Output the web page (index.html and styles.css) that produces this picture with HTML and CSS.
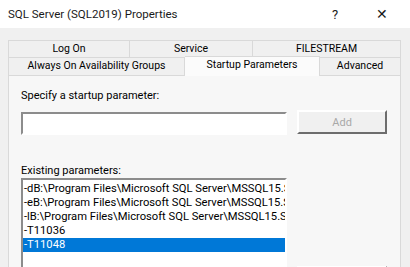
FILE: index.html
```html
<!DOCTYPE html>
<html lang="en">
<head>
    <meta charset="UTF-8">
    <title>SQL Server (SQL2019) Properties</title>
    <link rel="stylesheet" href="styles.css">
</head>
<body>
    <div class="window">
        <div class="titlebar">
            <span class="title">SQL Server (SQL2019) Properties</span>
            <span class="help">?</span>
            <span class="close">&#x2715;</span>
        </div>
        <div class="dialog">
            <div class="tabs">
                <div class="tab-row">
                    <div class="tab w-logon">Log On</div>
                    <div class="tab w-service">Service</div>
                    <div class="tab w-filestream">FILESTREAM</div>
                </div>
                <div class="tab-row">
                    <div class="tab w-always">Always On Availability Groups</div>
                    <div class="tab w-startup active">Startup Parameters</div>
                    <div class="tab w-advanced">Advanced</div>
                </div>
            </div>
            <div class="panel">
                <div class="label">Specify a startup parameter:</div>
                <div class="field-row">
                    <input type="text" class="param-input">
                    <button class="btn" disabled>Add</button>
                </div>
                <div class="label existing">Existing parameters:</div>
                <div class="field-row">
                    <ul class="listbox">
                        <li>-dB:\Program Files\Microsoft SQL Server\MSSQL15.SQL2019\MSSQL\DATA\master.mdf</li>
                        <li>-eB:\Program Files\Microsoft SQL Server\MSSQL15.SQL2019\MSSQL\Log\ERRORLOG</li>
                        <li>-lB:\Program Files\Microsoft SQL Server\MSSQL15.SQL2019\MSSQL\DATA\mastlog.ldf</li>
                        <li>-T11036</li>
                        <li class="selected">-T11048</li>
                    </ul>
                    <button class="btn remove">Remove</button>
                </div>
            </div>
        </div>
    </div>
</body>
</html>
```

FILE: styles.css
```css
body {
    margin: 0;
    font-family: Roboto, sans-serif;
    background: #f0f0f0;
}
.window {
    width: 410px;
    height: 267px;
    overflow: hidden;
}
.titlebar {
    height: 28px;
    background: #ffffff;
    display: flex;
    align-items: center;
    padding-left: 8px;
    font-size: 11.5px;
    color: #1a1a1a;
}
.title {
    flex: 1;
}
.help {
    width: 44px;
    font-size: 13px;
}
.close {
    width: 34px;
    font-size: 14px;
}
.dialog {
    padding: 12px 9px 0 8px;
}
.tab-row {
    display: flex;
    height: 17px;
}
.tab-row + .tab-row {
    height: 18px;
}
.tab {
    box-sizing: border-box;
    border: 1px solid #d9d9d9;
    border-bottom: none;
    background: #f0f0f0;
    font-size: 10.5px;
    line-height: 16px;
    text-align: center;
    color: #000;
    white-space: nowrap;
}
.tab + .tab {
    border-left: none;
}
.w-logon { width: 122px; }
.w-service { width: 123px; }
.w-filestream { width: 148px; }
.w-always { width: 177px; }
.w-startup { width: 135px; }
.w-advanced { width: 81px; }
.tab.active {
    background: #fbfbfb;
    margin-top: -1px;
    height: 20px;
    position: relative;
    z-index: 1;
}
.panel {
    height: 200px;
    box-sizing: border-box;
    border: 1px solid #d9d9d9;
    background: #f7f7f7;
    padding: 12px 13px 0 12px;
}
.label {
    font-size: 11px;
    line-height: 16px;
    color: #000;
}
.field-row {
    display: flex;
    gap: 10px;
    margin-top: 6px;
    align-items: flex-start;
}
.param-input {
    box-sizing: border-box;
    width: 267px;
    height: 23px;
    margin: 2px 0 0 0;
    padding: 0;
    background: #ffffff;
    border: 2px solid #ffffff;
    border-top-color: #8c8c8c;
    border-left-color: #8c8c8c;
}
.btn {
    box-sizing: border-box;
    width: 90px;
    height: 24px;
    padding: 0;
    font-family: Roboto, sans-serif;
    font-size: 11px;
    color: #a8a8a8;
    background: #f0f0f0;
    border: 2px solid #6d6d6d;
    border-top-color: #ffffff;
    border-left-color: #ffffff;
}
.existing {
    margin-top: 28px;
}
.listbox {
    box-sizing: border-box;
    width: 267px;
    height: 120px;
    margin: -7px 0 0 0;
    padding: 2px 0 0 0;
    list-style: none;
    background: #ffffff;
    border: 2px solid #ffffff;
    border-top-color: #8c8c8c;
    border-left-color: #8c8c8c;
    overflow: hidden;
}
.listbox li {
    height: 14px;
    line-height: 14px;
    font-size: 11.2px;
    padding-left: 1px;
    white-space: nowrap;
    overflow: hidden;
    color: #000;
}
.listbox li.selected {
    background: #0078d7;
    color: #ffffff;
}
.btn.remove {
    margin-top: 81px;
    color: #000;
}
```
